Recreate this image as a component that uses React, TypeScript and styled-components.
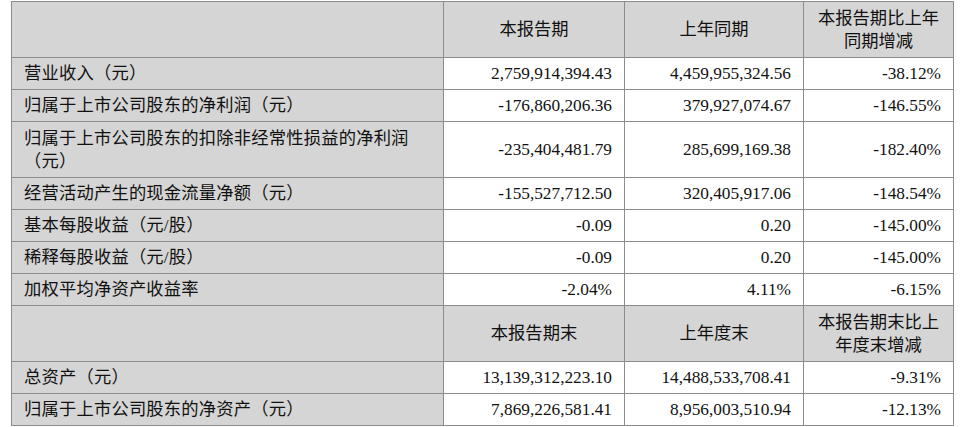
import React from 'react';
import styled, { createGlobalStyle } from 'styled-components';

const GlobalStyle = createGlobalStyle`
  html, body {
    margin: 0;
    padding: 0;
    background: #ffffff;
  }
  body {
    font-family: "Liberation Serif", "Noto Sans CJK SC", serif;
    color: #111111;
  }
`;

const Page = styled.div`
  padding: 1px 0 0 11px;
`;

const Table = styled.table`
  border-collapse: collapse;
  table-layout: fixed;
  width: 943px;
  font-size: 17.3px;
`;

const Cell = styled.td<{ $gray?: boolean; $align?: 'left' | 'right' | 'center'; $tall?: boolean }>`
  border: 1px solid #8c8c8c;
  background: ${p => (p.$gray ? '#d5d5d5' : '#ffffff')};
  text-align: ${p => p.$align || 'right'};
  height: ${p => (p.$tall ? '56px' : '32px')};
  padding: 0 ${p => (p.$align === 'center' ? '6px' : '12px')};
  line-height: 23px;
  vertical-align: middle;
  white-space: pre-line;
  box-sizing: border-box;
`;

const LabelText = styled.span`
  letter-spacing: 0.2px;
`;

type Row = { label: string; a: string; b: string; c: string; tall?: boolean };

const periodRows: Row[] = [
  { label: '营业收入（元）', a: '2,759,914,394.43', b: '4,459,955,324.56', c: '-38.12%' },
  { label: '归属于上市公司股东的净利润（元）', a: '-176,860,206.36', b: '379,927,074.67', c: '-146.55%' },
  {
    label: '归属于上市公司股东的扣除非经常性损益的净利润\n（元）',
    a: '-235,404,481.79',
    b: '285,699,169.38',
    c: '-182.40%',
    tall: true,
  },
  { label: '经营活动产生的现金流量净额（元）', a: '-155,527,712.50', b: '320,405,917.06', c: '-148.54%' },
  { label: '基本每股收益（元/股）', a: '-0.09', b: '0.20', c: '-145.00%' },
  { label: '稀释每股收益（元/股）', a: '-0.09', b: '0.20', c: '-145.00%' },
  { label: '加权平均净资产收益率', a: '-2.04%', b: '4.11%', c: '-6.15%' },
];

const endRows: Row[] = [
  { label: '总资产（元）', a: '13,139,312,223.10', b: '14,488,533,708.41', c: '-9.31%' },
  { label: '归属于上市公司股东的净资产（元）', a: '7,869,226,581.41', b: '8,956,003,510.94', c: '-12.13%' },
];

function HeaderRow({ cols }: { cols: string[] }) {
  return (
    <tr>
      <Cell $gray $tall $align="center" />
      {cols.map(c => (
        <Cell key={c} $gray $tall $align="center">
          {c}
        </Cell>
      ))}
    </tr>
  );
}

function DataRow({ row }: { row: Row }) {
  return (
    <tr>
      <Cell $gray $align="left" $tall={row.tall}>
        <LabelText>{row.label}</LabelText>
      </Cell>
      <Cell $tall={row.tall}>{row.a}</Cell>
      <Cell $tall={row.tall}>{row.b}</Cell>
      <Cell $tall={row.tall}>{row.c}</Cell>
    </tr>
  );
}

export default function App() {
  return (
    <Page>
      <GlobalStyle />
      <Table>
        <colgroup>
          <col style={{ width: 432 }} />
          <col style={{ width: 181 }} />
          <col style={{ width: 179 }} />
          <col style={{ width: 150 }} />
        </colgroup>
        <tbody>
          <HeaderRow cols={['本报告期', '上年同期', '本报告期比上年\n同期增减']} />
          {periodRows.map(r => (
            <DataRow key={r.label} row={r} />
          ))}
          <HeaderRow cols={['本报告期末', '上年度末', '本报告期末比上\n年度末增减']} />
          {endRows.map(r => (
            <DataRow key={r.label} row={r} />
          ))}
        </tbody>
      </Table>
    </Page>
  );
}
